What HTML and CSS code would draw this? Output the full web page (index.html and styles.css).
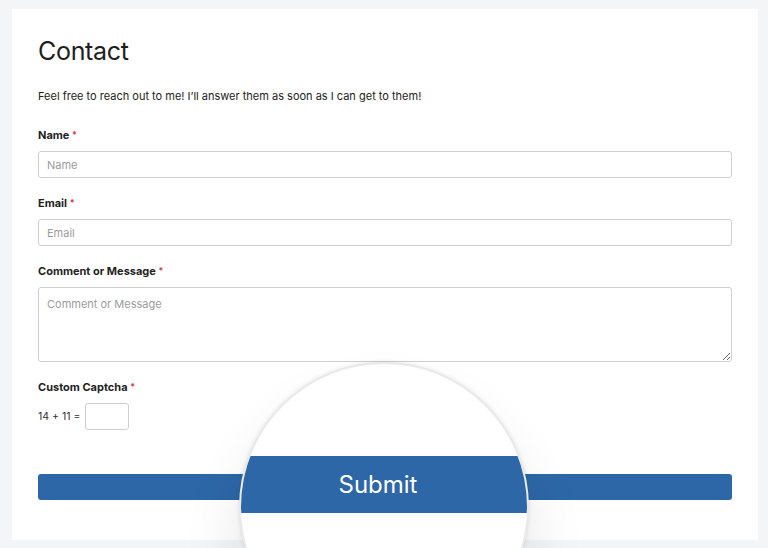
FILE: index.html
```html
<!DOCTYPE html>
<html lang="en">
<head>
<meta charset="utf-8">
<title>Contact</title>
<link rel="stylesheet" href="styles.css">
</head>
<body>
<main class="card">
  <h1 class="title">Contact</h1>
  <p class="intro">Feel free to reach out to me! I’ll answer them as soon as I can get to them!</p>
  <form class="form">
    <div class="field">
      <label class="label">Name <span class="req">*</span></label>
      <input class="input" type="text" placeholder="Name">
    </div>
    <div class="field">
      <label class="label">Email <span class="req">*</span></label>
      <input class="input" type="text" placeholder="Email">
    </div>
    <div class="field">
      <label class="label">Comment or Message <span class="req">*</span></label>
      <textarea class="input textarea" placeholder="Comment or Message"></textarea>
    </div>
    <div class="field">
      <label class="label">Custom Captcha <span class="req">*</span></label>
      <div class="captcha-row">
        <span class="sum">14 + 11 =</span>
        <input class="input captcha" type="text">
      </div>
    </div>
    <button class="submit" type="button" aria-label="Submit"></button>
  </form>
</main>
<div class="magnifier">
  <div class="mag-bar">Submit</div>
</div>
</body>
</html>
```

FILE: styles.css
```css
* { box-sizing: border-box; }

html, body {
  height: 548px;
  overflow: hidden;
}

body {
  margin: 0;
  padding: 9px 10px 0 12px;
  background: #f4f5f7;
  font-family: Inter, "Noto Sans", "Liberation Sans", sans-serif;
  color: #222;
  position: relative;
}

.card {
  width: 746px;
  height: 531px;
  background: #fff;
  padding: 27px 26px 0 26px;
}

.title {
  margin: 0;
  font-size: 25px;
  line-height: 30px;
  font-weight: 400;
  letter-spacing: -0.3px;
  color: #1e1e1e;
}

.intro {
  margin: 22px 0 0;
  font-size: 11px;
  line-height: 16px;
  color: #222;
}

.form {
  margin-top: 23px;
  display: flex;
  flex-direction: column;
}

.field {
  display: flex;
  flex-direction: column;
  margin-bottom: 17px;
}

.label {
  font-size: 11px;
  line-height: 16px;
  font-weight: 700;
  color: #1f1f1f;
  margin-bottom: 8px;
}

.req {
  color: #d63638;
  font-size: 9px;
  font-weight: 600;
  vertical-align: 1px;
}

.input {
  height: 27px;
  border: 1px solid #cfcfcf;
  border-radius: 3px;
  padding: 0 8px;
  font-family: inherit;
  font-size: 11px;
  color: #333;
  background: #fff;
  outline: none;
}

.input::placeholder {
  color: #9c9c9c;
}

.textarea {
  height: 75px;
  padding-top: 9px;
  resize: vertical;
  line-height: 14px;
}

.captcha-row {
  display: flex;
  align-items: center;
  gap: 5px;
}

.sum {
  font-size: 10.5px;
  color: #333;
}

.captcha {
  width: 44px;
}

.submit {
  margin-top: 27px;
  height: 26px;
  border: none;
  border-radius: 3px;
  background: #2e67a7;
  color: #fff;
  font-family: inherit;
  font-size: 11px;
}

.magnifier {
  position: absolute;
  left: 239px;
  top: 362px;
  width: 290px;
  height: 290px;
  border-radius: 50%;
  border: 2px solid #e9e9e9;
  background: #fff;
  overflow: hidden;
  box-shadow: 0 0 4px rgba(0, 0, 0, 0.10), 0 40px 60px rgba(0, 0, 0, 0.10);
}

.mag-bar {
  margin-top: 92px;
  height: 57px;
  background: #2e67a7;
  color: #fff;
  font-size: 24px;
  display: flex;
  align-items: center;
  justify-content: center;
  padding-right: 12px;
}
```
